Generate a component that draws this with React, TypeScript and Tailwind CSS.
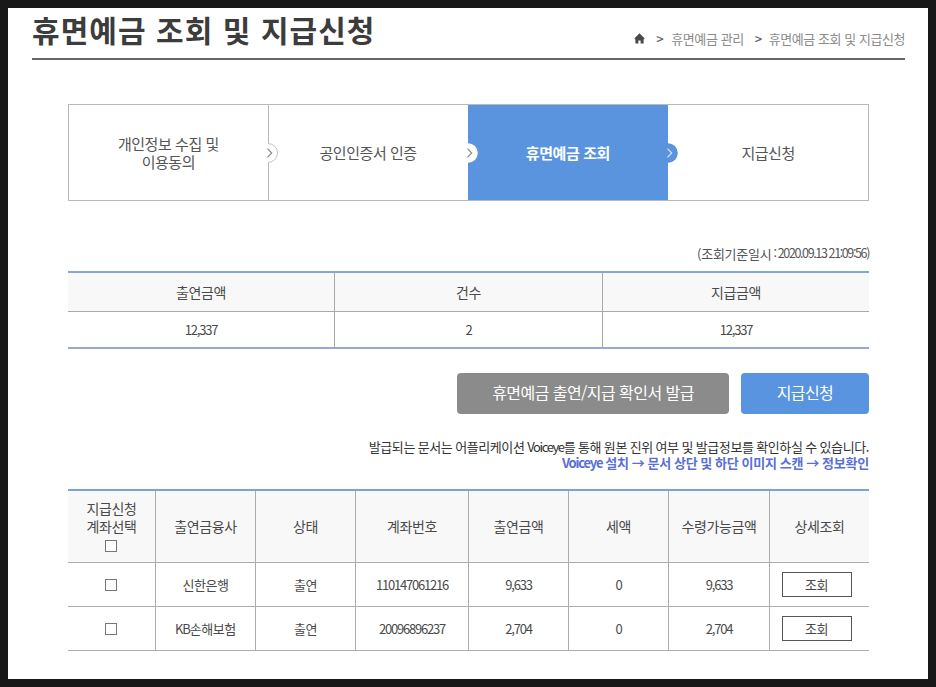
import React from 'react';

interface Step {
  lines: string[];
  active?: boolean;
  arrow?: 'outline' | 'white' | 'blue';
}

interface Account {
  bank: React.ReactNode;
  status: string;
  accountNo: string;
  amount: string;
  tax: string;
  payable: string;
}

const steps: Step[] = [
  { lines: ['개인정보 수집 및', '이용동의'], arrow: 'outline' },
  { lines: ['공인인증서 인증'], arrow: 'white' },
  { lines: ['휴면예금 조회'], active: true, arrow: 'blue' },
  { lines: ['지급신청'] },
];

const accounts: Account[] = [
  {
    bank: '신한은행',
    status: '출연',
    accountNo: '110147061216',
    amount: '9,633',
    tax: '0',
    payable: '9,633',
  },
  {
    bank: <><span className="tracking-[-1.2px]">KB</span>손해보험</>,
    status: '출연',
    accountNo: '20096896237',
    amount: '2,704',
    tax: '0',
    payable: '2,704',
  },
];

const HomeIcon = () => (
  <svg width="11" height="11" viewBox="0 0 11 11" className="ml-px fill-[#4a4a4a]">
    <path d="M5.5 0.2 L10.4 5.3 V6.2 H9.6 V10.6 H6.6 V7.6 H4.4 V10.6 H1.4 V6.2 H0.6 V5.3 Z" />
  </svg>
);

const StepArrow: React.FC<{ kind: 'outline' | 'white' | 'blue' }> = ({ kind }) => (
  <svg width="22" height="22" viewBox="0 0 22 22" className="absolute -right-[11px] top-1/2 -translate-y-1/2 z-10">
    {kind === 'outline' && (
      <>
        <circle cx="11" cy="11" r="9.5" fill="#fff" />
        <path d="M11 1.5 A9.5 9.5 0 0 1 11 20.5" fill="none" stroke="#c4c4c4" />
      </>
    )}
    {kind === 'white' && <circle cx="11" cy="11" r="9.8" fill="#fff" />}
    {kind === 'blue' && <circle cx="11" cy="11" r="9.8" fill="#5893dc" />}
    <path
      d="M10.5 6.7 L14.7 11 L10.5 15.3"
      fill="none"
      stroke={kind === 'blue' ? '#d5e5f8' : '#8a8a8a'}
      strokeWidth="1.2"
    />
  </svg>
);

const CheckBox = () => <span className="block mx-auto -translate-x-px size-3 border border-[#777] bg-white" />;

const Num: React.FC<{ children: React.ReactNode }> = ({ children }) => (
  <span className="tracking-[-1.2px]">{children}</span>
);

const SummaryTable = () => (
  <table className="w-full table-fixed border-separate border-spacing-0 border-t-2 border-t-[#84a9d0] border-b-2 border-b-[#98a9d0] text-center text-[#4a4a4a]">
    <colgroup>
      <col className="w-[267px]" />
      <col className="w-[268px]" />
      <col />
    </colgroup>
    <thead>
      <tr className="h-[39px] bg-[#f8f8f9] text-[14px] tracking-[-0.35px]">
        {['출연금액', '건수', '지급금액'].map((h) => (
          <th key={h} className="p-0 font-normal border-b border-r last:border-r-0 border-[#a9a9ad]">{h}</th>
        ))}
      </tr>
    </thead>
    <tbody>
      <tr className="h-[35px] text-[13px]">
        <td className="p-0 border-r border-[#a9a9ad]"><Num>12,337</Num></td>
        <td className="p-0 border-r border-[#a9a9ad]"><Num>2</Num></td>
        <td className="p-0"><Num>12,337</Num></td>
      </tr>
    </tbody>
  </table>
);

const AccountTable = () => {
  const headers = ['출연금융사', '상태', '계좌번호', '출연금액', '세액', '수령가능금액', '상세조회'];
  const cell = 'p-0 border-r border-b border-[#adadb0]';

  return (
    <table className="w-full table-fixed border-separate border-spacing-0 border-t-2 border-t-[#7aa5d3] text-center text-[#4a4a4a]">
      <colgroup>
        <col className="w-[88px]" />
        <col className="w-[100px]" />
        <col className="w-[100px]" />
        <col className="w-[113px]" />
        <col className="w-[100px]" />
        <col className="w-[100px]" />
        <col className="w-[101px]" />
        <col />
      </colgroup>
      <thead>
        <tr className="h-[72px] bg-[#f8f8f9] text-[14px] leading-[18px] tracking-[-0.35px]">
          <th className="p-0 pb-0.5 font-normal border-r border-b border-[#adadb0]">
            지급신청<br />계좌선택
            <span className="block pt-[5px]"><CheckBox /></span>
          </th>
          {headers.map((h) => (
            <th key={h} className="p-0 pb-0.5 font-normal border-r last:border-r-0 border-b border-[#adadb0]">{h}</th>
          ))}
        </tr>
      </thead>
      <tbody>
        {accounts.map((a) => (
          <tr key={a.accountNo} className="h-11 text-[13px] tracking-[-0.4px]">
            <td className={cell}><CheckBox /></td>
            <td className={cell}>{a.bank}</td>
            <td className={cell}>{a.status}</td>
            <td className={cell}><Num>{a.accountNo}</Num></td>
            <td className={cell}><Num>{a.amount}</Num></td>
            <td className={cell}><Num>{a.tax}</Num></td>
            <td className={cell}><Num>{a.payable}</Num></td>
            <td className="p-0 border-b border-[#adadb0]">
              <button className="block mx-auto -translate-x-[3px] w-[70px] h-[25px] border border-[#555] bg-white leading-none">조회</button>
            </td>
          </tr>
        ))}
      </tbody>
    </table>
  );
};

export default function App() {
  return (
    <div
      lang="ko"
      className="w-[936px] h-[687px] overflow-hidden border-8 border-[#181818] bg-white font-['Noto_Sans_CJK_KR','Noto_Sans',sans-serif]"
    >
      <header className="ml-6 w-[873px] h-[52px] flex items-start justify-between border-b-2 border-[#666]">
        <h1 className="h-[42px] flex items-center text-[30px] font-bold leading-none tracking-[1.05px] text-[#3c3c3c]">
          휴면예금 조회 및 지급신청
        </h1>
        <nav className="mt-[21px] h-[18px] flex items-center text-[13px] leading-none tracking-[-0.4px] text-[#8a8a8a]">
          <HomeIcon />
          <span className="ml-[11px] w-[15px] font-medium text-[#666]">&gt;</span>
          <span>휴면예금 관리</span>
          <span className="ml-[11px] w-[14px] font-medium text-[#666]">&gt;</span>
          <span className="tracking-[-0.45px]">휴면예금 조회 및 지급신청</span>
        </nav>
      </header>

      <main className="ml-[60px] w-[801px]">
        <ol className="mt-11 h-[97px] flex border border-[#b9b9b9]">
          {steps.map((step) => (
            <li
              key={step.lines[0]}
              className={
                step.active
                  ? 'relative -ml-px w-[201px] flex flex-col items-center justify-center bg-[#5b94de] text-white font-bold text-[15px] leading-[18px] tracking-[-0.4px]'
                  : 'relative w-[200px] flex flex-col items-center justify-center border-r last:border-r-0 border-[#b9b9b9] text-[#555] text-[15px] leading-[18px] tracking-[-0.45px]'
              }
            >
              {step.lines.map((line) => (
                <span key={line}>{line}</span>
              ))}
              {step.arrow && <StepArrow kind={step.arrow} />}
            </li>
          ))}
        </ol>

        <p className="mt-[42px] mb-2 h-5 flex items-center justify-end whitespace-pre text-[13px] leading-none text-[#555]">
          <span className="tracking-[-0.25px]">(조회기준일시</span>
          <span className="text-[12.5px] tracking-[-1.38px]"> : 2020.09.13 21:09:56)</span>
        </p>
        <SummaryTable />

        <div className="mt-6 flex justify-end gap-3 text-[16px] text-white">
          <button className="w-[272px] h-[41px] pb-1 rounded-[4px] bg-[#8b8b8b] tracking-[-0.55px]">
            휴면예금 출연/지급 확인서 발급
          </button>
          <button className="w-32 h-[41px] pb-1 rounded-[4px] bg-[#5894e0] tracking-[-0.6px]">지급신청</button>
        </div>

        <div className="mt-[25px] mb-[18px] h-8 text-right text-[13px] leading-4 [word-spacing:-0.5px]">
          <p className="tracking-[-0.4px] text-[#333]">
            발급되는 문서는 어플리케이션 <span className="tracking-[-1.4px]">Voiceye</span>를 통해 원본 진위 여부 및 발급정보를 확인하실 수 있습니다.
          </p>
          <p className="font-bold tracking-[-0.2px] text-[#5a6fd6]">
            <span className="tracking-[-1.2px]">Voiceye</span> 설치 → 문서 상단 및 하단 이미지 스캔 → 정보확인
          </p>
        </div>
        <AccountTable />
      </main>
    </div>
  );
}
